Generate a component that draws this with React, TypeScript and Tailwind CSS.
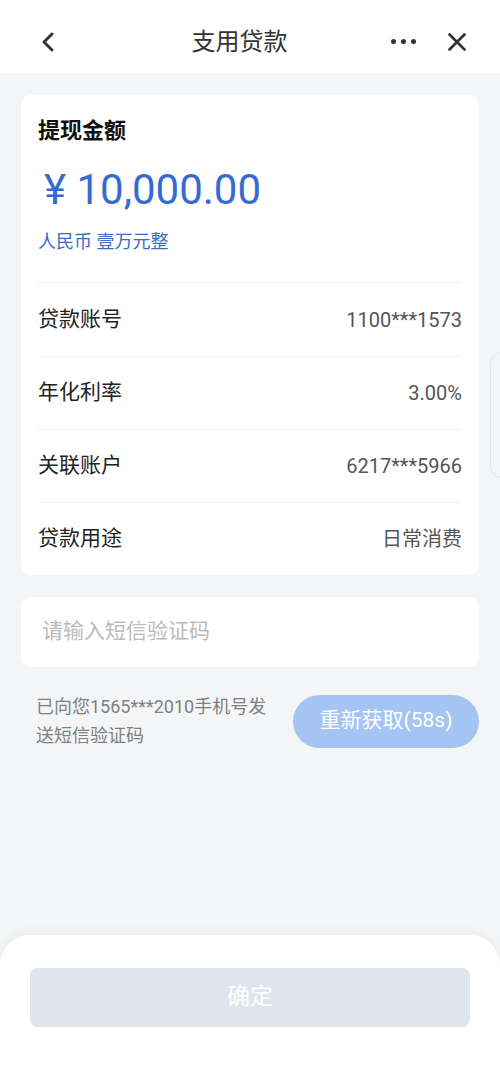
import { ChevronLeft, X } from "lucide-react";

const rows = [
  { label: "贷款账号", value: "1100***1573" },
  { label: "年化利率", value: "3.00%" },
  { label: "关联账户", value: "6217***5966" },
  { label: "贷款用途", value: "日常消费" },
];

export default function App() {
  return (
    <div className="relative h-[1066px] w-[500px] overflow-hidden bg-[#f4f5f7] font-['Roboto','Noto_Sans_CJK_SC',sans-serif] flex flex-col">
      {/* Header */}
      <div className="h-[73px] bg-white flex items-center justify-between pl-[32px] pr-[28px] pt-[10px] shrink-0">
        <ChevronLeft className="w-[32px] h-[32px] text-[#333]" strokeWidth={2.2} />
        <h1 className="text-[24px] text-[#333] ml-[24px]">支用贷款</h1>
        <div className="flex items-center gap-[26px]">
          <div className="flex gap-[5px]">
            <span className="w-[5px] h-[5px] rounded-full bg-[#333]" />
            <span className="w-[5px] h-[5px] rounded-full bg-[#333]" />
            <span className="w-[5px] h-[5px] rounded-full bg-[#333]" />
          </div>
          <X className="w-[30px] h-[30px] text-[#333]" strokeWidth={2.2} />
        </div>
      </div>

      {/* Amount card */}
      <div className="mx-[21px] mt-[22px] bg-white rounded-[10px] px-[17px]">
        <p className="pt-[20px] text-[22px] font-bold text-[#111] leading-[32px]">提现金额</p>
        <p className="mt-[18px] text-[42px] text-[#356bd0] leading-[50px] pl-[6px]">¥ 10,000.00</p>
        <p className="mt-[15px] text-[18px] text-[#3a6cc8] leading-[24px]">人民币 壹万元整</p>
        <div className="mt-[28px] border-t border-[#eeeff1]">
          {rows.map((r, i) => (
            <div
              key={r.label}
              className={`h-[73px] flex items-center justify-between ${i > 0 ? "border-t border-[#eeeff1]" : ""}`}
            >
              <span className="text-[21px] text-[#222]">{r.label}</span>
              <span className="text-[20px] text-[#555]">{r.value}</span>
            </div>
          ))}
        </div>
      </div>

      {/* SMS input */}
      <div className="mx-[21px] mt-[22px] h-[70px] bg-white rounded-[10px] flex items-center px-[21px]">
        <span className="text-[21px] text-[#bbbbbb]">请输入短信验证码</span>
      </div>

      <div className="mt-[25px] mx-[21px] flex items-center justify-between">
        <p className="pl-[15px] w-[262px] text-[18px] leading-[29px] text-[#808080]">
          已向您1565***2010手机号发送短信验证码
        </p>
        <div className="w-[186px] h-[53px] rounded-full bg-[#a4c4f3] flex items-center justify-center text-[21px] text-white">
          重新获取(58s)
        </div>
      </div>

      <div className="flex-1" />

      {/* Bottom sheet */}
      <div className="h-[131px] bg-white rounded-t-[30px] shadow-[0_-4px_12px_rgba(0,0,0,0.04)] px-[30px] pt-[33px]">
        <div className="h-[59px] rounded-[8px] bg-[#dfe5ee] flex items-center justify-center text-[23px] text-white">
          确定
        </div>
      </div>

      {/* Floating side handle */}
      <div className="absolute right-[-14px] top-[352px] w-[24px] h-[126px] rounded-[12px] border border-[#e3e4e6] bg-[#f4f5f7]" />
    </div>
  );
}
